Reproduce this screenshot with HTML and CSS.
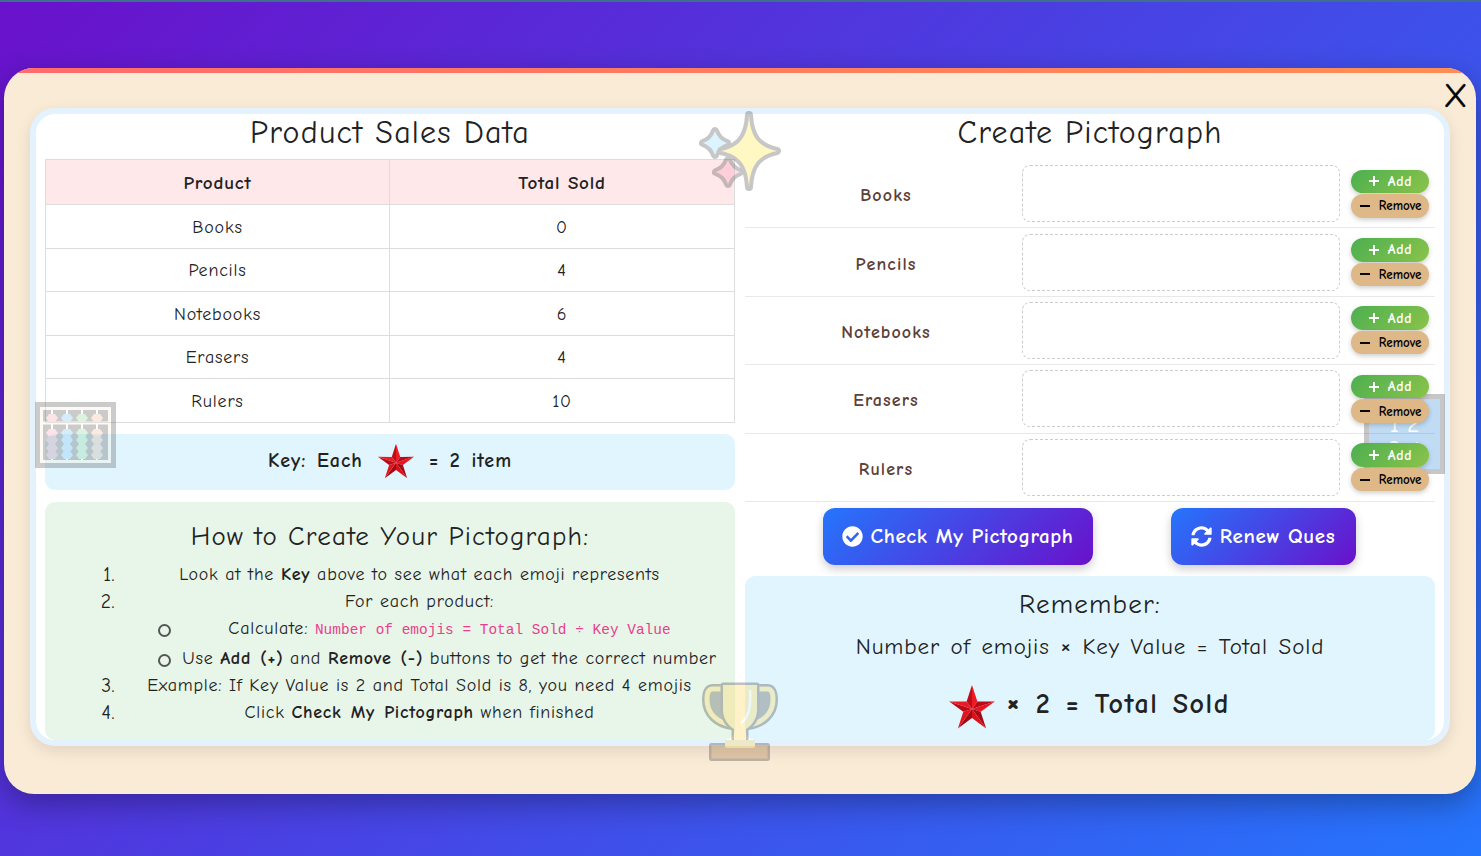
FILE: index.html
```html
<!DOCTYPE html>
<html lang="en">
<head>
    <meta charset="UTF-8">
    <meta name="viewport" content="width=device-width, initial-scale=1.0">
    <title>Pictograph</title>
    <link rel="stylesheet" href="styles.css">
</head>
<body>

    <svg class="defs" width="0" height="0">
        <defs>
            <symbol id="star" viewBox="0 0 100 100">
                <polygon points="50,2 61.2,36.6 50,52" fill="#ed1c24"/>
                <polygon points="61.2,36.6 97.6,36.5 50,52" fill="#b80d18"/>
                <polygon points="97.6,36.5 68.1,57.9 50,52" fill="#e8141f"/>
                <polygon points="68.1,57.9 79.4,92.5 50,52" fill="#a50b14"/>
                <polygon points="79.4,92.5 50,71 50,52" fill="#dc1019"/>
                <polygon points="50,71 20.6,92.5 50,52" fill="#a00a13"/>
                <polygon points="20.6,92.5 31.9,57.9 50,52" fill="#e4141e"/>
                <polygon points="31.9,57.9 2.4,36.5 50,52" fill="#b80c17"/>
                <polygon points="2.4,36.5 38.8,36.6 50,52" fill="#ec1a24"/>
                <polygon points="38.8,36.6 50,2 50,52" fill="#bc0e19"/>
            </symbol>
            <path id="bead" d="M-6 0l3-4h6l3 4-3 4h-6z"/>
        </defs>
    </svg>

    <div class="modal">
        <div class="close">X</div>

        <div class="card">
            <!-- left column -->
            <div class="column">
                <h2>Product Sales Data</h2>
                <table class="sales">
                    <tr><th>Product</th><th>Total Sold</th></tr>
                    <tr><td>Books</td><td>0</td></tr>
                    <tr><td>Pencils</td><td>4</td></tr>
                    <tr><td>Notebooks</td><td>6</td></tr>
                    <tr><td>Erasers</td><td>4</td></tr>
                    <tr><td>Rulers</td><td>10</td></tr>
                </table>

                <div class="key">
                    <span>Key: Each</span>
                    <svg class="key-star"><use href="#star"/></svg>
                    <span>= 2 item</span>
                </div>

                <div class="howto">
                    <h3>How to Create Your Pictograph:</h3>
                    <ol>
                        <li>Look at the <b>Key</b> above to see what each emoji represents</li>
                        <li>For each product:
                            <ul>
                                <li>Calculate: <code>Number of emojis = Total Sold ÷ Key Value</code></li>
                                <li>Use <b>Add (+)</b> and <b>Remove (-)</b> buttons to get the correct number</li>
                            </ul>
                        </li>
                        <li>Example: If Key Value is 2 and Total Sold is 8, you need 4 emojis</li>
                        <li>Click <b>Check My Pictograph</b> when finished</li>
                    </ol>
                </div>
            </div>

            <!-- right column -->
            <div class="column">
                <h2>Create Pictograph</h2>
                <div class="rows">
                    <div class="row">
                        <div class="label">Books</div>
                        <div class="dropzone"></div>
                        <div class="actions">
                            <button class="add"><svg viewBox="0 0 12 12"><path d="M6 1v10M1 6h10"/></svg>Add</button>
                            <button class="remove"><svg viewBox="0 0 12 12"><path d="M1 6h10"/></svg>Remove</button>
                        </div>
                    </div>
                    <div class="row">
                        <div class="label">Pencils</div>
                        <div class="dropzone"></div>
                        <div class="actions">
                            <button class="add"><svg viewBox="0 0 12 12"><path d="M6 1v10M1 6h10"/></svg>Add</button>
                            <button class="remove"><svg viewBox="0 0 12 12"><path d="M1 6h10"/></svg>Remove</button>
                        </div>
                    </div>
                    <div class="row">
                        <div class="label">Notebooks</div>
                        <div class="dropzone"></div>
                        <div class="actions">
                            <button class="add"><svg viewBox="0 0 12 12"><path d="M6 1v10M1 6h10"/></svg>Add</button>
                            <button class="remove"><svg viewBox="0 0 12 12"><path d="M1 6h10"/></svg>Remove</button>
                        </div>
                    </div>
                    <div class="row">
                        <div class="label">Erasers</div>
                        <div class="dropzone"></div>
                        <div class="actions">
                            <button class="add"><svg viewBox="0 0 12 12"><path d="M6 1v10M1 6h10"/></svg>Add</button>
                            <button class="remove"><svg viewBox="0 0 12 12"><path d="M1 6h10"/></svg>Remove</button>
                        </div>
                    </div>
                    <div class="row">
                        <div class="label">Rulers</div>
                        <div class="dropzone"></div>
                        <div class="actions">
                            <button class="add"><svg viewBox="0 0 12 12"><path d="M6 1v10M1 6h10"/></svg>Add</button>
                            <button class="remove"><svg viewBox="0 0 12 12"><path d="M1 6h10"/></svg>Remove</button>
                        </div>
                    </div>
                </div>

                <div class="controls">
                    <button class="main-btn check">
                        <svg viewBox="0 0 512 512"><path d="M504 256c0 136.967-111.033 248-248 248S8 392.967 8 256 119.033 8 256 8s248 111.033 248 248zM227.314 387.314l184-184c6.248-6.248 6.248-16.379 0-22.627l-22.627-22.627c-6.248-6.249-16.379-6.249-22.628 0L216 308.118l-70.059-70.059c-6.248-6.248-16.379-6.248-22.628 0l-22.627 22.627c-6.248 6.248-6.248 16.379 0 22.627l104 104c6.249 6.249 16.379 6.249 22.628.001z"/></svg>
                        Check My Pictograph
                    </button>
                    <button class="main-btn renew">
                        <svg viewBox="0 0 512 512"><path d="M370.72 133.28C339.458 104.008 298.888 87.962 255.848 88c-77.458.068-144.328 53.178-162.791 126.85-1.344 5.363-6.122 9.15-11.651 9.15H24.103c-7.498 0-13.194-6.807-11.807-14.176C33.933 94.924 134.813 8 256 8c66.448 0 126.791 26.136 171.315 68.685L463.03 40.97C478.149 25.851 504 36.559 504 57.941V192c0 13.255-10.745 24-24 24H345.941c-21.382 0-32.09-25.851-16.971-40.971l41.75-41.749zM32 296h134.059c21.382 0 32.09 25.851 16.971 40.971l-41.75 41.75c31.262 29.273 71.835 45.319 114.876 45.28 77.418-.07 144.315-53.144 162.787-126.849 1.344-5.363 6.122-9.15 11.651-9.15h57.304c7.498 0 13.194 6.807 11.807 14.176C478.067 417.076 377.187 504 256 504c-66.448 0-126.791-26.136-171.315-68.685L48.97 471.03C33.851 486.149 8 475.441 8 454.059V320c0-13.255 10.745-24 24-24z"/></svg>
                        Renew Ques
                    </button>
                </div>

                <div class="remember">
                    <h3>Remember:</h3>
                    <p class="formula">Number of emojis <span class="times">×</span> Key Value = Total Sold</p>
                    <div class="example">
                        <svg class="example-star"><use href="#star"/></svg>
                        <span><span class="times">×</span> 2 = Total Sold</span>
                    </div>
                </div>
            </div>

            <!-- floating decorations -->
            <svg class="deco deco-sparkle" viewBox="0 0 82 82">
                <path class="outline" d="M16 20Q19 29 28 32Q19 35 16 44Q13 35 4 32Q13 29 16 20Z" fill="#81d8ff"/>
                <path class="outline" d="M29 49Q32 58 41 61Q32 64 29 73Q26 64 17 61Q26 58 29 49Z" fill="#ff90ac"/>
                <path class="outline" d="M50 4C51 24 58 36 78 40C58 44 51 56 50 76C49 56 42 44 22 40C42 36 49 24 50 4Z" fill="#ffe925"/>
            </svg>

            <svg class="deco deco-abacus" viewBox="0 0 81 66">
                <rect width="81" height="66" fill="#444"/>
                <path d="M17 6v54M32 6v54M47 6v54M62 6v54" stroke="#fff" stroke-width="2"/>
                <path d="M6.500 6.500h68v53h-68z M6.500 21h68" fill="none" stroke="#fbeedc" stroke-width="3"/>
                <g transform="translate(17 0)">
                    <g fill="#f59aa4"><use href="#bead" y="16"/><use href="#bead" y="31"/></g>
                    <g fill="#c07f98"><use href="#bead" y="38"/><use href="#bead" y="46"/><use href="#bead" y="53"/></g>
                </g>
                <g fill="#70bcf0" transform="translate(32 0)">
                    <use href="#bead" y="16"/><use href="#bead" y="31"/><use href="#bead" y="38"/><use href="#bead" y="46"/><use href="#bead" y="53"/>
                </g>
                <g fill="#7ed68a" transform="translate(47 0)">
                    <use href="#bead" y="16"/><use href="#bead" y="31"/><use href="#bead" y="38"/><use href="#bead" y="46"/><use href="#bead" y="53"/>
                </g>
                <g transform="translate(62 0)">
                    <g fill="#fbb48c"><use href="#bead" y="16"/><use href="#bead" y="31"/></g>
                    <g fill="#c4a690"><use href="#bead" y="38"/><use href="#bead" y="46"/><use href="#bead" y="53"/></g>
                </g>
            </svg>

            <svg class="deco deco-trophy" viewBox="0 0 76 82">
                <g id="handle">
                    <path d="M20 9H11C6 9 5 13 5 20C5 34 16 43 30 45" fill="#333" stroke="#333" stroke-width="10"/>
                    <path d="M20 9H11C6 9 5 13 5 20C5 34 16 43 30 45" fill="#444" stroke="#ffd54f" stroke-width="5"/>
                </g>
                <use href="#handle" transform="matrix(-1 0 0 1 76 0)"/>
                <path class="outline thin" d="M21 5H55V30C55 40 48 47 44 49V60H32V49C28 47 21 40 21 30Z" fill="#ffd54f"/>
                <rect class="outline thin" x="9.500" y="65.500" width="56" height="13" fill="#a0703c"/>
                <rect x="23" y="60" width="30" height="8" rx="2" fill="#ffd54f"/>
                <path d="M48 10C49 24 47 38 39 43" fill="none" stroke="#fff" stroke-width="2.500"/>
            </svg>

            <div class="deco deco-tile"><span>1 2</span><span>3 4</span></div>
        </div>
    </div>

</body>
</html>
```

FILE: styles.css
```css
/* Page background */
* {
    box-sizing: border-box;
}

body {
    margin: 0;
    height: 856px;
    overflow: hidden;
    padding: 66px 5px 0 4px;
    border-top: 2px solid #3f6f8f;
    background: linear-gradient(135deg, #6a11cb, #2575fc);
    font-family: "Comic Sans MS", "Comic Neue", Lato, sans-serif;
    color: #222;
}

.defs {
    display: block;
    height: 0;
}

/* Modal */
.modal {
    position: relative;
    overflow: hidden;
    height: 726px;
    padding: 40px 26px 0;
    background: #faebd7;
    border-radius: 30px;
    box-shadow: 0 10px 30px rgba(0, 0, 0, 0.3);
}

.modal::before {
    content: "";
    position: absolute;
    top: 0;
    left: 0;
    right: 0;
    height: 5px;
    background: linear-gradient(90deg, #ff6b6b, #ff8e53);
}

.close {
    position: absolute;
    top: 6px;
    right: 9px;
    font-size: 34px;
    line-height: 44px;
    color: #000;
    -webkit-text-stroke: 0.5px #000;
}

/* White card */
.card {
    position: relative;
    display: grid;
    grid-template-columns: 690px 690px;
    gap: 10px;
    width: 1420px;
    height: 638px;
    padding: 0 9px;
    background: #fff;
    border: 6px solid #e3f2fd;
    border-radius: 25px;
    box-shadow: 0 5px 15px rgba(0, 0, 0, 0.1);
}

.column {
    display: flex;
    flex-direction: column;
    min-width: 0;
}

h2 {
    margin: 0;
    height: 45px;
    font-size: 32px;
    line-height: 38px;
    font-weight: 400;
    text-align: center;
    letter-spacing: 1.2px;
}

/* Sales table */
.sales {
    width: 690px;
    height: 264px;
    border-collapse: collapse;
    table-layout: fixed;
    font-size: 18px;
    letter-spacing: 0.8px;
}

.sales th,
.sales td {
    border: 1px solid #ddd;
    text-align: center;
    padding: 1px 0 0;
}

.sales th {
    background: #ffe8ea;
    font-size: 19px;
    font-weight: 700;
}

.sales th:first-child {
    width: 344px;
}

/* Key box */
.key {
    display: flex;
    align-items: center;
    justify-content: center;
    gap: 14px;
    height: 56px;
    margin-top: 11px;
    background: #e1f5fe;
    border-radius: 10px;
    font-size: 20px;
    font-weight: 700;
    letter-spacing: 1px;
    word-spacing: 2.500px;
}

.key span {
    margin-top: -4px;
}

.key-star {
    width: 38px;
    height: 38px;
}

/* Instructions */
.howto {
    height: 238px;
    margin-top: 12px;
    padding: 18px 15px 0;
    background: #e8f5e9;
    border-radius: 10px;
    font-size: 18px;
    letter-spacing: 0.75px;
}

.howto h3,
.remember h3 {
    margin: 0;
    font-size: 27px;
    line-height: 34px;
    font-weight: 400;
    text-align: center;
    letter-spacing: 1.2px;
}

.howto ol {
    margin: 7px 0 0;
    padding-left: 59px;
    list-style: none;
    counter-reset: step;
}

.howto ul {
    margin: 0;
    padding-left: 60px;
    list-style: none;
}

.howto li {
    position: relative;
    line-height: 27.200px;
    text-align: center;
}

/* Numbers and rings stay out of the line boxes */
.howto ol > li {
    counter-increment: step;
}

.howto ol > li::before {
    content: counter(step) ".";
    position: absolute;
    top: 0;
    right: 100%;
    margin-right: 4px;
    font-size: 19.500px;
    letter-spacing: 0.5px;
}

.howto ul > li::before {
    content: "";
    position: absolute;
    top: 9px;
    left: -21px;
    width: 9px;
    height: 9px;
    border: 2px solid #555;
    border-radius: 50%;
}

.howto b {
    word-spacing: 2px;
}

code {
    font-family: "Liberation Mono", monospace;
    font-size: 14.400px;
    color: #e83e8c;
    letter-spacing: 0.04px;
}

.times {
    font-size: 1.25em;
    line-height: 1;
}

/* Pictograph rows */
.rows {
    height: 342px;
    margin-top: 1px;
}

.row {
    display: grid;
    grid-template-columns: 277px 318px 78px;
    align-items: center;
    height: 68.400px;
    border-bottom: 1px solid #e8e8e8;
}

.label {
    padding: 4px 0 0 5px;
    text-align: center;
    font-size: 18px;
    font-weight: 700;
    color: #5d4037;
    letter-spacing: 1.1px;
}

.dropzone {
    height: 57px;
    border: 1px dashed #ccc;
    border-radius: 8px;
}

.actions {
    position: relative;
    z-index: 2;
    display: flex;
    flex-direction: column;
    gap: 1px;
    margin-left: 11px;
    width: 78px;
}

.actions button {
    display: flex;
    align-items: center;
    justify-content: center;
    height: 23.500px;
    padding: 0;
    border: none;
    border-radius: 12px;
    font-family: inherit;
    font-size: 13px;
    font-weight: 700;
    box-shadow: 0 2px 5px rgba(0, 0, 0, 0.2);
}

.actions svg {
    width: 12px;
    height: 12px;
    fill: none;
    stroke-width: 1.900;
}

.add {
    gap: 8px;
    color: #fff;
    background: linear-gradient(135deg, #4caf50, #8bc34a);
    letter-spacing: 0.8px;
}

.actions .add {
    font-size: 14px;
}

.add svg {
    stroke: #fff;
}

.remove {
    gap: 8px;
    color: #000;
    background: #deb887;
}

.remove svg {
    stroke: #000;
}

/* Main buttons */
.controls {
    display: flex;
    justify-content: center;
    gap: 78px;
    height: 57px;
    margin-top: 6px;
    padding-right: 2px;
}

.main-btn {
    display: flex;
    align-items: center;
    justify-content: center;
    gap: 8px;
    height: 57px;
    padding-bottom: 2px;
    border: none;
    border-radius: 12px;
    color: #fff;
    background: linear-gradient(135deg, #2575fc, #6a11cb);
    font-family: inherit;
    font-size: 21px;
    font-weight: 700;
    letter-spacing: 0.6px;
    box-shadow: 0 4px 10px rgba(0, 0, 0, 0.2);
}

.main-btn svg {
    width: 21px;
    height: 21px;
    fill: #fff;
}

.check {
    width: 270px;
}

.renew {
    width: 185px;
}

/* Remember box */
.remember {
    height: 164px;
    margin-top: 11px;
    padding-top: 12px;
    background: #e1f5fe;
    border-radius: 10px;
    text-align: center;
}

.formula {
    margin: 9px 0 0;
    font-size: 23px;
    line-height: 32px;
    letter-spacing: 0.9px;
    word-spacing: 2px;
}

.example {
    display: flex;
    align-items: center;
    justify-content: center;
    gap: 10px;
    margin-top: 15px;
    padding-right: 2px;
    font-size: 28px;
    font-weight: 700;
    letter-spacing: 1.5px;
    word-spacing: 3px;
}

.example-star {
    width: 48px;
    height: 48px;
    margin: 6px 0 -6px;
}

/* Floating decorations */
.deco {
    position: absolute;
    pointer-events: none;
}

.outline {
    stroke: #333;
    stroke-width: 8px;
    stroke-linejoin: round;
    paint-order: stroke;
}

.outline.thin {
    stroke-width: 5px;
}

.deco-sparkle {
    left: 663px;
    top: -3px;
    width: 82px;
    height: 82px;
    opacity: 0.27;
}

.deco-abacus {
    left: -1px;
    top: 288px;
    width: 81px;
    height: 66px;
    opacity: 0.27;
}

.deco-trophy {
    left: 666px;
    top: 566px;
    width: 76px;
    height: 82px;
    opacity: 0.3;
}

.deco-tile {
    left: 1328px;
    top: 280px;
    z-index: 1;
    display: flex;
    flex-direction: column;
    align-items: center;
    justify-content: center;
    width: 81px;
    height: 80px;
    padding-top: 6px;
    border: 5px solid #333;
    background: #177fd7;
    color: #fff;
    font-size: 24px;
    line-height: 26px;
    opacity: 0.27;
}
```
